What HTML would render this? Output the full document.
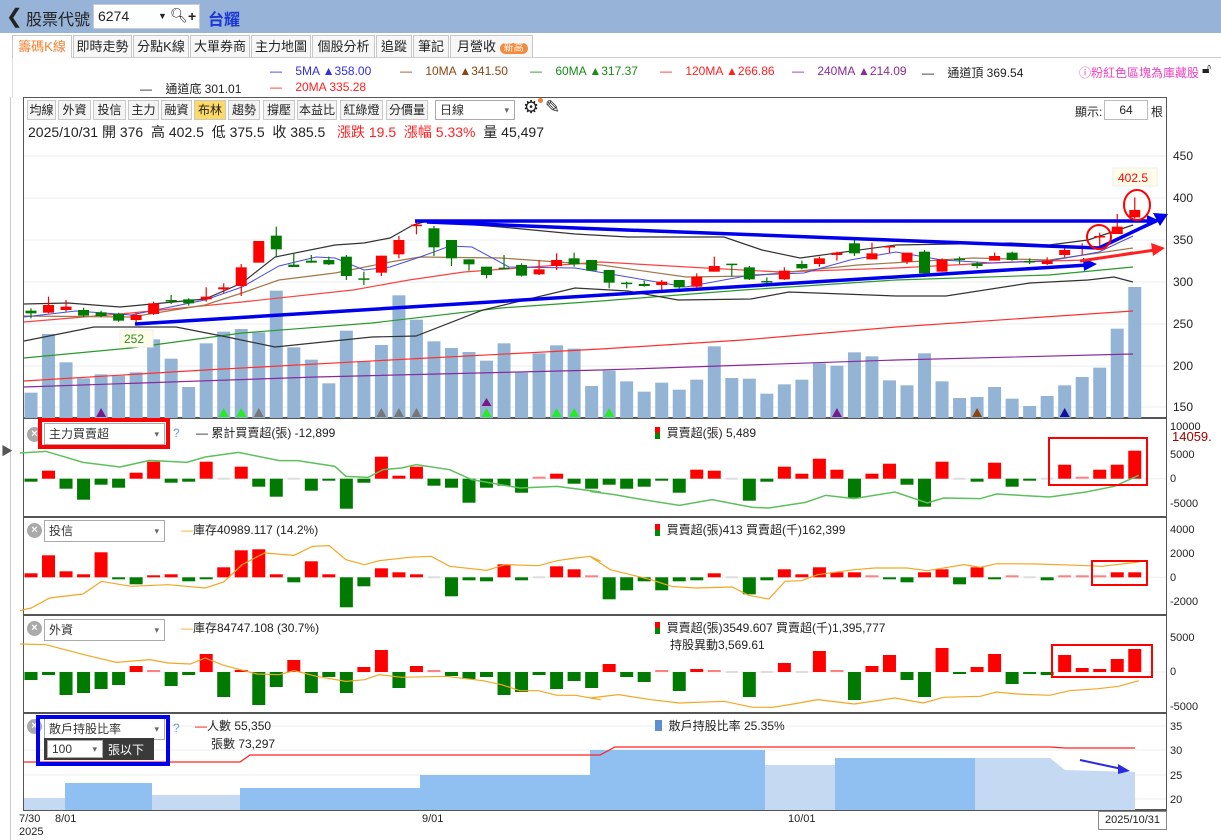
<!DOCTYPE html>
<html><head><meta charset="utf-8">
<style>
*{margin:0;padding:0;box-sizing:border-box}
body{width:1221px;height:840px;overflow:hidden;background:#fff;font-family:"Liberation Sans","Noto Sans CJK TC",sans-serif;position:relative;color:#222}
.a{position:absolute;white-space:nowrap}
#top{left:0;top:0;width:1221px;height:33px;background:#97b4d8}
.tab{position:absolute;top:35px;height:22px;border:1px solid #c8c8c8;border-bottom:none;background:#f7f7f7;font-size:13px;line-height:21px;text-align:center;color:#222}
.tb{position:absolute;top:100px;height:20px;border:1px solid #c9c9c9;background:#f4f4f4;font-size:12px;line-height:18px;text-align:center}
.lg{font-size:12px;top:64px}
.sel{position:absolute;height:22px;border:1px solid #aaa;background:#fff;font-size:12px;line-height:20px;padding-left:4px;color:#333}
.sel:after{content:"▾";position:absolute;right:5px;top:0;font-size:9px;color:#666}
.x{position:absolute;width:15px;height:15px;border-radius:50%;background:#aaa;color:#fff;font-size:11px;line-height:15px;text-align:center;font-weight:bold}
.ax{position:absolute;left:1170px;font-size:12px;color:#222}
</style></head><body>
<div id="top" class="a"></div>
<div class="a" style="left:6px;top:4px;font-size:20px;color:#222">❮</div>
<div class="a" style="left:26px;top:6px;font-size:16px;color:#222">股票代號</div>
<div class="a" style="left:93px;top:4px;width:107px;height:25px;background:#fff;border:1px solid #ccc;font-size:14px;line-height:23px;padding-left:4px">6274<span style="position:absolute;left:64px;font-size:9px">▼</span><span style="position:absolute;left:76px;top:-1px;font-size:14px">🔍︎</span><span style="position:absolute;left:94px;font-weight:bold">+</span></div>
<div class="a" style="left:208px;top:6px;font-size:16px;color:#1a35d6;font-weight:bold">台耀</div>

<div class="a" style="left:12px;top:57px;width:1209px;height:1px;background:#ccc"></div>
<div class="tab" style="left:12px;width:60px;background:#fff;color:#f08030;height:23px">籌碼K線</div>
<div class="tab" style="left:73px;width:59px">即時走勢</div>
<div class="tab" style="left:133px;width:56px">分點K線</div>
<div class="tab" style="left:190px;width:60px">大單券商</div>
<div class="tab" style="left:251px;width:60px">主力地圖</div>
<div class="tab" style="left:312px;width:63px">個股分析</div>
<div class="tab" style="left:376px;width:36px">追蹤</div>
<div class="tab" style="left:413px;width:36px">筆記</div>
<div class="tab" style="left:450px;width:83px;text-align:left;padding-left:6px">月營收 <span style="background:#f58a3c;color:#fff;border-radius:8px;font-size:10px;padding:0 4px">新高</span></div>
<div class="a" style="left:12px;top:58px;width:1px;height:40px;background:#ddd"></div>

<div class="a lg" style="left:270px;color:#3030e0">—&nbsp;&nbsp;&nbsp; 5MA ▲358.00</div>
<div class="a lg" style="left:400px;color:#8b4513">—&nbsp;&nbsp;&nbsp; 10MA ▲341.50</div>
<div class="a lg" style="left:530px;color:#1a8a1a">—&nbsp;&nbsp;&nbsp; 60MA ▲317.37</div>
<div class="a lg" style="left:660px;color:#ff2020">—&nbsp;&nbsp;&nbsp; 120MA ▲266.86</div>
<div class="a lg" style="left:792px;color:#8a2a9a">—&nbsp;&nbsp;&nbsp; 240MA ▲214.09</div>
<div class="a lg" style="left:922px;color:#222">—&nbsp;&nbsp;&nbsp; 通道頂 369.54</div>
<div class="a lg" style="left:1079px;color:#f040c0">ⓘ粉紅色區塊為庫藏股</div>
<div class="a" style="left:1202px;top:60px;font-size:14px">🔓︎</div>
<div class="a lg" style="left:140px;top:80px;color:#222">—&nbsp;&nbsp;&nbsp; 通道底 301.01</div>
<div class="a lg" style="left:270px;top:80px;color:#ff2020">—&nbsp;&nbsp;&nbsp; 20MA 335.28</div>

<div class="a" style="left:23px;top:97px;width:1144px;height:714px;border:1px solid #555;border-right:1px solid #555"></div>
<div class="a" style="left:10px;top:97px;width:1px;height:743px;background:#ccc"></div>
<div class="a" style="left:1px;top:442px;font-size:12px;color:#555">▶</div>

<div class="tb" style="left:27px;width:29px">均線</div>
<div class="tb" style="left:58px;width:33px">外資</div>
<div class="tb" style="left:93px;width:33px">投信</div>
<div class="tb" style="left:128px;width:31px">主力</div>
<div class="tb" style="left:161px;width:31px">融資</div>
<div class="tb" style="left:194px;width:32px;background:#ffd966">布林</div>
<div class="tb" style="left:228px;width:32px">趨勢</div>
<div class="tb" style="left:263px;width:32px">撐壓</div>
<div class="tb" style="left:297px;width:40px">本益比</div>
<div class="tb" style="left:340px;width:43px">紅綠燈</div>
<div class="tb" style="left:386px;width:42px">分價量</div>
<div class="sel" style="left:435px;top:100px;width:80px;height:20px;line-height:18px">日線</div>
<div class="a" style="left:523px;top:97px;font-size:18px">⚙</div>
<div class="a" style="left:538px;top:98px;width:5px;height:5px;border-radius:50%;background:#f08030"></div>
<div class="a" style="left:545px;top:97px;font-size:18px">✎</div>
<div class="a" style="left:1075px;top:103px;font-size:12px">顯示:</div>
<div class="a" style="left:1104px;top:100px;width:44px;height:20px;border:1px solid #bbb;font-size:12px;text-align:center;line-height:18px">64</div>
<div class="a" style="left:1151px;top:103px;font-size:12px">根</div>
<div class="a" style="left:28px;top:122px;font-size:14px">2025/10/31 開 376&nbsp; 高 402.5&nbsp; 低 375.5&nbsp; 收 385.5&nbsp;&nbsp; <span style="color:#f22">漲跌 19.5&nbsp; 漲幅 5.33%</span>&nbsp; 量 45,497</div>

<svg class="a" style="left:0;top:0" width="1221" height="840" id="s"></svg>

<div class="x" style="left:27px;top:427px">×</div>
<div class="sel" style="left:44px;top:423px;width:121px">主力買賣超</div>
<div class="a" style="left:38px;top:418px;width:132px;height:31px;border:4px solid #f00"></div>
<div class="a" style="left:173px;top:426px;font-size:12px;color:#6a9ae0">?</div>
<div class="a" style="left:196px;top:424px;font-size:12px">— 累計買賣超(張) -12,899</div>
<div class="a" style="left:655px;top:424px;font-size:12px"><span style="display:inline-block;width:5px;height:12px;background:linear-gradient(#f00 50%,#080 50%);vertical-align:-2px"></span>&nbsp; 買賣超(張) 5,489</div>

<div class="x" style="left:27px;top:523px">×</div>
<div class="sel" style="left:44px;top:520px;width:121px">投信</div>
<div class="a" style="left:181px;top:521px;font-size:12px"><span style="color:#f5a623">—</span>庫存40989.117 (14.2%)</div>
<div class="a" style="left:655px;top:521px;font-size:12px"><span style="display:inline-block;width:5px;height:12px;background:linear-gradient(#f00 50%,#080 50%);vertical-align:-2px"></span>&nbsp; 買賣超(張)413 買賣超(千)162,399</div>

<div class="x" style="left:27px;top:621px">×</div>
<div class="sel" style="left:44px;top:619px;width:121px">外資</div>
<div class="a" style="left:181px;top:619px;font-size:12px"><span style="color:#f5a623">—</span>庫存84747.108 (30.7%)</div>
<div class="a" style="left:655px;top:619px;font-size:12px"><span style="display:inline-block;width:5px;height:12px;background:linear-gradient(#f00 50%,#080 50%);vertical-align:-2px"></span>&nbsp; 買賣超(張)3549.607 買賣超(千)1,395,777</div>
<div class="a" style="left:670px;top:636px;font-size:12px">持股異動3,569.61</div>

<div class="x" style="left:27px;top:719px">×</div>
<div class="sel" style="left:44px;top:718px;width:121px">散戶持股比率</div>
<div class="a" style="left:44px;top:738px;width:110px;height:22px;background:#3a3a3a"></div>
<div class="sel" style="left:47px;top:740px;width:56px;height:18px;line-height:16px">100</div>
<div class="a" style="left:108px;top:741px;font-size:12px;color:#fff">張以下</div>
<div class="a" style="left:36px;top:715px;width:134px;height:51px;border:4px solid #0000ee"></div>
<div class="a" style="left:173px;top:721px;font-size:12px;color:#6a9ae0">?</div>
<div class="a" style="left:195px;top:717px;font-size:12px"><span style="color:#f00">—</span>人數 55,350</div>
<div class="a" style="left:211px;top:735px;font-size:12px">張數 73,297</div>
<div class="a" style="left:655px;top:717px;font-size:12px"><span style="display:inline-block;width:7px;height:11px;background:#5b8fd0;vertical-align:-1px"></span>&nbsp; 散戶持股比率 25.35%</div>

<div class="a" style="left:1172px;top:429px;font-size:13px;color:#a00000">14059.</div>
<div class="a" style="left:19px;top:813px;font-size:11px">7/30</div>
<div class="a" style="left:19px;top:826px;font-size:11px">2025</div>
<div class="a" style="left:55px;top:813px;font-size:11px">8/01</div>
<div class="a" style="left:422px;top:813px;font-size:11px">9/01</div>
<div class="a" style="left:788px;top:813px;font-size:11px">10/01</div>
<div class="a" style="left:1098px;top:811px;width:69px;height:19px;border:1px solid #888;font-size:11px;line-height:17px;text-align:center;background:#fff">2025/10/31</div>

<script>
const S=document.getElementById('s');let h='';
const X=i=>31+17.52*i;
const Y=z=>140+z/3;
function pl(pts,c,w,op){h+=`<polyline points="${pts.map(p=>p.join(',')).join(' ')}" fill="none" stroke="${c}" stroke-width="${w||1}" ${op?'stroke-opacity="'+op+'"':''}/>`;}
// grid
[156,198,240,282,324,366,407].forEach(y=>h+=`<line x1="24" x2="1166" y1="${y}" y2="${y}" stroke="#eee"/>`);
// axis labels
[[450,156],[400,198],[350,240],[300,282],[250,324],[200,366],[150,407]].forEach(a=>h+=`<text x="1173" y="${a[1]+4}" font-size="12" fill="#222">${a[0]}</text>`);
[['10000',426],['5000',454],['0',478],['-5000',503],['4000',529],['2000',553],['0',577],['-2000',601],['5000',637],['0',671],['-5000',706],['35',726],['30',750],['25',775],['20',799]].forEach(a=>h+=`<text x="1170" y="${a[1]+4}" font-size="11" fill="#222">${a[0]}</text>`);
// separators
[418,517,615,713,810].forEach(y=>h+=`<line x1="24" x2="1166" y1="${y}" y2="${y}" stroke="#555" stroke-width="${y==810?2:2}"/>`);
// volumes
const vol=[758,582,667,715,703,707,697,598,656,741,610,575,567,577,452,622,659,730,572,664,615,466,539,604,624,636,662,610,698,640,616,626,738,692,724,755,728,749,719,619,714,716,761,733,719,670,677,637,649,721,736,640,724,774,771,741,776,798,768,736,711,683,566,441];
vol.forEach((v,i)=>h+=`<rect x="${X(i)-6.5}" y="${Y(v)}" width="13" height="${418-Y(v)}" fill="#94b4d6"/>`);
// MAs
pl([[24,387],[316,377],[601,370],[896,360],[1133,354]],'#8a2a9a',1.2);
pl([[24,381],[205,370],[390,360],[601,349],[743,340],[896,327],[1133,311]],'#ff3030',1.2);
pl([[24,358],[131,348],[242,333],[372,323],[501,308],[601,301],[743,290],[896,280],[1049,275],[1133,267]],'#2a9a2a',1.2);
pl([[24,322],[131,313],[242,302],[353,290],[409,280],[464,272],[601,262],[705,268],[781,272],[896,268],[1011,262],[1088,260],[1133,252]],'#ff4040',1.2);
pl([[24,316],[131,317],[205,305],[242,293],[279,280],[335,273],[390,262],[420,257],[501,258],[601,265],[686,277],[751,276],[858,265],[973,258],[1049,260],[1133,248]],'#a0784a',1.2);
pl([[24,317],[76,311],[131,315],[205,300],[242,287],[279,266],[316,257],[335,258],[364,270],[390,267],[420,257],[450,246],[472,247],[509,267],[575,268],[628,277],[686,287],[751,275],[804,273],[850,260],[896,252],[942,260],[992,263],[1049,261],[1099,252],[1133,236]],'#4a4ae0',1);
pl([[24,304],[68,303],[120,307],[205,299],[242,283],[275,257],[335,245],[364,243],[390,238],[413,225],[427,221],[501,227],[575,234],[628,237],[724,237],[762,250],[800,258],[896,245],[1011,243],[1049,245],[1088,240],[1133,225]],'#333',1.2);
pl([[24,341],[94,327],[176,327],[227,337],[275,347],[372,337],[416,336],[483,310],[575,288],[628,291],[678,300],[751,299],[789,292],[896,296],[946,296],[1030,283],[1088,280],[1114,277],[1133,282]],'#333',1.2);
// candles
const C=[[512,520,505,535,'g'],[495,518,470,520,'r'],[500,510,480,515,'r'],[510,527,503,532,'g'],[517,528,512,532,'g'],[522,542,518,545,'g'],[525,540,518,550,'r'],[490,522,485,525,'r'],[480,484,465,492,'g'],[478,490,475,497,'g'],[470,478,442,485,'r'],[442,448,430,460,'r'],[382,438,372,468,'r'],[303,368,303,368,'r'],[287,328,260,350,'g'],[374,381,342,381,'g'],[362,368,345,368,'g'],[360,373,350,375,'g'],[350,408,345,420,'g'],[415,419,395,435,'g'],[347,398,347,408,'r'],[300,343,288,355,'r'],[254,257,245,283,'r'],[265,322,258,348,'g'],[300,355,300,378,'g'],[358,373,358,392,'g'],[380,405,380,415,'g'],[383,387,345,388,'g'],[375,407,370,410,'g'],[388,403,360,405,'r'],[360,378,340,390,'r'],[355,373,338,380,'g'],[360,392,360,392,'g'],[390,428,390,445,'g'],[428,432,425,445,'g'],[432,438,422,440,'g'],[425,435,420,455,'r'],[420,442,420,445,'g'],[410,440,400,442,'r'],[378,395,350,395,'r'],[371,375,371,410,'g'],[382,418,378,420,'g'],[423,427,412,440,'g'],[392,418,382,420,'r'],[372,385,362,388,'g'],[355,372,350,380,'r'],[338,345,335,362,'r'],[310,340,298,348,'g'],[340,358,308,358,'r'],[318,322,318,340,'r'],[338,365,338,372,'r'],[335,400,330,410,'g'],[358,395,355,395,'r'],[356,360,350,372,'g'],[370,378,365,385,'g'],[348,362,338,362,'r'],[338,360,335,362,'g'],[363,367,355,372,'g'],[362,372,352,375,'r'],[330,345,322,352,'r'],[318,325,310,345,'r'],[288,292,278,325,'r'],[260,282,222,282,'r'],[210,232,172,235,'r']];
C.forEach((c,i)=>{const col=c[4]=='r'?'#ff0000':'#007a00';const x=X(i);
h+=`<line x1="${x}" x2="${x}" y1="${Y(c[2])}" y2="${Y(c[3])}" stroke="${col}" stroke-width="1.2"/>`;
h+=`<rect x="${x-5.5}" y="${Y(c[0])}" width="11" height="${Math.max(1.5,(c[1]-c[0])/3)}" fill="${col}"/>`;});
// trend lines
h+=`<line x1="415" y1="221" x2="1152" y2="221" stroke="#0000ee" stroke-width="3.5"/>`;
h+=`<polygon points="1147,215 1160,221 1147,227" fill="#0000ee"/>`;
pl([[427,222],[601,229],[1099,248]],'#0000ee',3.5);
pl([[1099,248],[1160,219]],'#0000ee',3.5);
h+=`<polygon points="1168,214 1153,213 1160,226" fill="#0000ee"/>`;
pl([[135,324],[1088,265]],'#0000ee',3.5);
h+=`<polygon points="1097,264 1083,258 1084,271" fill="#0000ee"/>`;
pl([[1080,261],[1155,250]],'#ff2020',3);
h+=`<polygon points="1165,248 1151,243 1153,256" fill="#ff2020"/>`;
h+=`<ellipse cx="1137" cy="205" rx="13" ry="15" fill="none" stroke="#ff0000" stroke-width="2"/>`;
h+=`<ellipse cx="1099" cy="237" rx="12" ry="12" fill="none" stroke="#ff0000" stroke-width="2"/>`;
h+=`<rect x="1113" y="168" width="44" height="18" fill="#fffde8" stroke="#eee"/><text x="1118" y="182" font-size="12" fill="#f00">402.5</text>`;
h+=`<rect x="120" y="330" width="33" height="17" fill="#fffde8" stroke="#eee"/><text x="124" y="343" font-size="12" fill="#2a8a2a">252</text>`;
// triangles
[[4,'#7a1a8a'],[11,'#22ee22'],[12,'#22ee22'],[13,'#777'],[20,'#777'],[21,'#777'],[22,'#777'],[26,'#22ee22'],[30,'#22ee22'],[31,'#22ee22'],[33,'#22ee22'],[46,'#7a1a8a'],[54,'#8b4513'],[59,'#1010a0']].forEach(t=>{const x=X(t[0]);h+=`<polygon points="${x-5},417 ${x+5},417 ${x},408" fill="${t[1]}"/>`});
h+=`<polygon points="${X(26)-5},406 ${X(26)+5},406 ${X(26)},398" fill="#7a1a8a"/>`;
// sub panels
function bars(vals,zero){vals.forEach((v,i)=>{if(v==0){h+=`<line x1="${X(i)-6}" x2="${X(i)+6}" y1="${zero}" y2="${zero}" stroke="#ddd" stroke-width="2"/>`;return;}
const col=v>0?(Math.abs(v)<2?'#ff8080':'#ff0000'):'#007a00';const hh=Math.max(2,Math.abs(v));
h+=`<rect x="${X(i)-6.5}" y="${v>0?zero-hh:zero}" width="13" height="${hh}" fill="${col}"/>`;});}
[478.7,577.3,672].forEach(z=>h+=`<line x1="24" x2="1166" y1="${z}" y2="${z}" stroke="#eee" stroke-width="1"/>`);
bars([-3,8,-10,-21,-6,-9,6,17,-4,-3,17,0,12,-8,-18,0,-12,-1,-30,-4,22,3,12,-7,-9,-24,-9,-7,-14,1,5,-5,-10,-6,-10,-8,-1,-14,9,8,0,-22,-3,12,5,20,9,-19,5,15,-6,-28,17,0,-3,16,-8,-2,0,14,1,9,14,28],478.7);
bars([4,22,6,3,25,-1,-7,2,3,-4,-2,10,27,28,3,-5,16,3,-30,-9,9,5,3,0,-19,-3,-4,13,-3,0,11,8,1,-22,-13,-4,-13,-4,-3,4,0,-17,-3,8,3,10,5,5,1,-1,-5,5,8,-7,10,-2,1,0,-3,1,1,1,5,5],577.3);
bars([-8,-3,-23,-21,-17,-13,6,1,-14,-3,18,-25,2,-33,-15,12,-21,-5,-21,5,22,-16,6,1,-4,-7,-5,-23,-20,-3,-17,-9,-16,8,-5,-10,1,-19,3,1,0,-25,0,9,0,21,1,-28,6,17,-8,-25,24,-2,5,18,-12,-2,-3,17,4,3,13,23],672);
const z7=(a)=>a.map(p=>[20+p[0]/2.7,418+p[1]/3]),z8=(a)=>a.map(p=>[590+p[0]/2.46,418+p[1]/3]);
pl(z7([[0,105],[70,100],[170,133],[270,147],[350,127],[450,133],[500,117],[590,103],[700,128],[750,128],[850,145],[880,175],[940,178],[980,155],[1030,150],[1070,140],[1160,155],[1220,185],[1350,210],[1450,205],[1568,222]]).concat(z8([[0,220],[60,230],[130,245],[220,262],[300,245],[400,268],[440,270],[530,253],[580,232],[650,242],[750,222],[830,255],[870,240],[960,242],[1000,228],[1130,237],[1220,222],[1290,205],[1350,172]])),'#5cc05c',1.5);
pl(z7([[0,578],[30,570],[80,540],[170,528],[220,490],[300,505],[400,500],[500,510],[550,492],[600,440],[660,405],[740,412],[790,385],[835,383],[880,425],[930,440],[970,428],[1050,418],[1110,415],[1160,445],[1260,457],[1310,440],[1400,443],[1450,428],[1500,420],[1540,415],[1568,430]]).concat(z8([[0,415],[50,455],[100,470],[150,485],[200,505],[260,510],[350,507],[390,532],[440,543],[480,490],[520,488],[560,470],[650,455],[700,450],[780,450],[830,458],[920,440],[960,448],[1000,437],[1100,438],[1200,442],[1260,445],[1350,432]])),'#f5a623',1.2);
pl(z7([[0,678],[70,680],[180,712],[260,733],[350,725],[400,735],[460,738],[500,720],[550,742],[640,768],[700,770],[740,758],[800,775],[880,790],[930,785],[970,770],[1030,778],[1150,775],[1250,788],[1300,800],[1350,818],[1400,818],[1450,832],[1500,832],[1568,845]]).concat(z8([[0,840],[70,830],[150,845],[220,855],[330,850],[400,868],[450,868],[500,858],[560,845],[650,858],[750,840],[820,855],[870,838],[960,835],[1000,822],[1050,828],[1130,832],[1180,818],[1250,812],[1300,805],[1350,788]])),'#f5a623',1.2);
// red boxes
h+=`<rect x="1049" y="438" width="98" height="47" fill="none" stroke="#f00" stroke-width="2"/>`;
h+=`<rect x="1092" y="561" width="55" height="24" fill="none" stroke="#f00" stroke-width="2"/>`;
h+=`<rect x="1052" y="645" width="100" height="32" fill="none" stroke="#f00" stroke-width="2"/>`;
// panel 4
[726,750,775,799].forEach(y=>h+=`<line x1="24" x2="1166" y1="${y}" y2="${y}" stroke="#eee"/>`);
const A=[[24,65,798,'#c5daf2'],[65,152,783,'#90bff2'],[152,240,795,'#c5daf2'],[240,420,788,'#90bff2'],[420,590,775,'#90bff2'],[590,765,750,'#90bff2'],[765,835,765,'#c5daf2'],[835,975,758,'#90bff2'],[975,1050,758,'#c5daf2']];
A.forEach(a=>h+=`<rect x="${a[0]}" y="${a[2]}" width="${a[1]-a[0]}" height="${810-a[2]}" fill="${a[3]}"/>`);
h+=`<polygon points="1050,758 1065,770 1135,772 1135,810 1050,810" fill="#c5daf2"/>`;
pl([[24,762],[240,762],[250,755],[600,755],[615,747],[1050,747],[1065,748],[1135,748]],'#ff2020',1.2);
pl([[1080,760],[1122,769]],'#2a2ae0',2);
h+=`<polygon points="1130,771 1118,764 1118,774" fill="#2a2ae0"/>`;
S.innerHTML=h;
</script>
</body></html>
